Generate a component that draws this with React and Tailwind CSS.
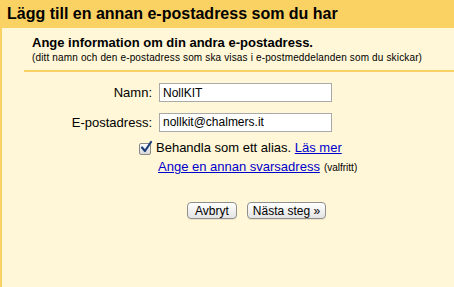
export default function App() {
  return (
    <div className="w-[454px] h-[287px] overflow-hidden bg-[#fff7d7] font-['Liberation_Sans',Arial,sans-serif] text-black">
      {/* HEADER */}
      <div className="h-[28px] bg-[#fad163] pl-[7px] flex items-center text-[16px] font-bold leading-none">
        Lägg till en annan e-postadress som du har
      </div>

      <div className="h-[259px] border-l-2 border-[#fad163]">
        {/* INTRO */}
        <div className="pl-[30px] pt-[7px]">
          <div className="text-[13px] font-bold leading-[15px]">Ange information om din andra e-postadress.</div>
          <div className="text-[10px] leading-[12px] mt-[2px] tracking-[0.15px]">
            (ditt namn och den e-postadress som ska visas i e-postmeddelanden som du skickar)
          </div>
        </div>
        <div className="ml-[22px] mt-[6px] h-[2px] bg-[#fad163]" />

        {/* FORM */}
        <div className="pt-[11px] flex flex-col gap-[10px]">
          <div className="flex items-center">
            <label className="w-[151px] text-right text-[13px] pr-[1px]">Namn:</label>
            <input
              className="ml-[6px] w-[173px] h-[19px] bg-white border border-[#a9a9a9] px-[3px] text-[12px] outline-none"
              defaultValue="NollKIT"
            />
          </div>
          <div className="flex items-center">
            <label className="w-[151px] text-right text-[13px] pr-[1px]">E-postadress:</label>
            <input
              className="ml-[6px] w-[173px] h-[19px] bg-white border border-[#a9a9a9] px-[3px] text-[12px] outline-none"
              defaultValue="nollkit@chalmers.it"
            />
          </div>
        </div>

        <div className="pl-[137px] mt-[8px] flex items-center gap-[5px] text-[13px] leading-[15px]">
          <span className="w-[12px] h-[12px] mt-[2px] rounded-[2px] border border-[#8a8a8a] bg-gradient-to-b from-white to-[#d8d8d8] flex items-center justify-center">
            <svg viewBox="0 0 12 12" className="w-[12px] h-[12px] -mt-[3px] ml-[1px] overflow-visible">
              <path d="M2 6.5 L5 10 L11 1" fill="none" stroke="#1d3f7a" strokeWidth="2.2" strokeLinecap="round" strokeLinejoin="round" />
            </svg>
          </span>
          <span>
            Behandla som ett alias.{" "}
            <a href="#" className="text-[#0000cc] underline">Läs mer</a>
          </span>
        </div>

        <div className="pl-[156px] mt-[4px] flex items-baseline gap-[4px] leading-[15px]">
          <a href="#" className="text-[13px] text-[#0000cc] underline">Ange en annan svarsadress</a>
          <span className="text-[10px]">(valfritt)</span>
        </div>

        {/* BUTTONS */}
        <div className="pl-[185px] mt-[27px] flex gap-[10px]">
          <button className="h-[17px] px-[7px] rounded-[4px] border border-[#8f8f8f] bg-gradient-to-b from-white to-[#e4e4e4] text-[12px] leading-none shadow-[0_1px_0_rgba(0,0,0,0.08)]">
            Avbryt
          </button>
          <button className="h-[17px] px-[5px] rounded-[4px] border border-[#8f8f8f] bg-gradient-to-b from-white to-[#e4e4e4] text-[12px] leading-none shadow-[0_1px_0_rgba(0,0,0,0.08)]">
            Nästa steg »
          </button>
        </div>
      </div>
    </div>
  );
}
